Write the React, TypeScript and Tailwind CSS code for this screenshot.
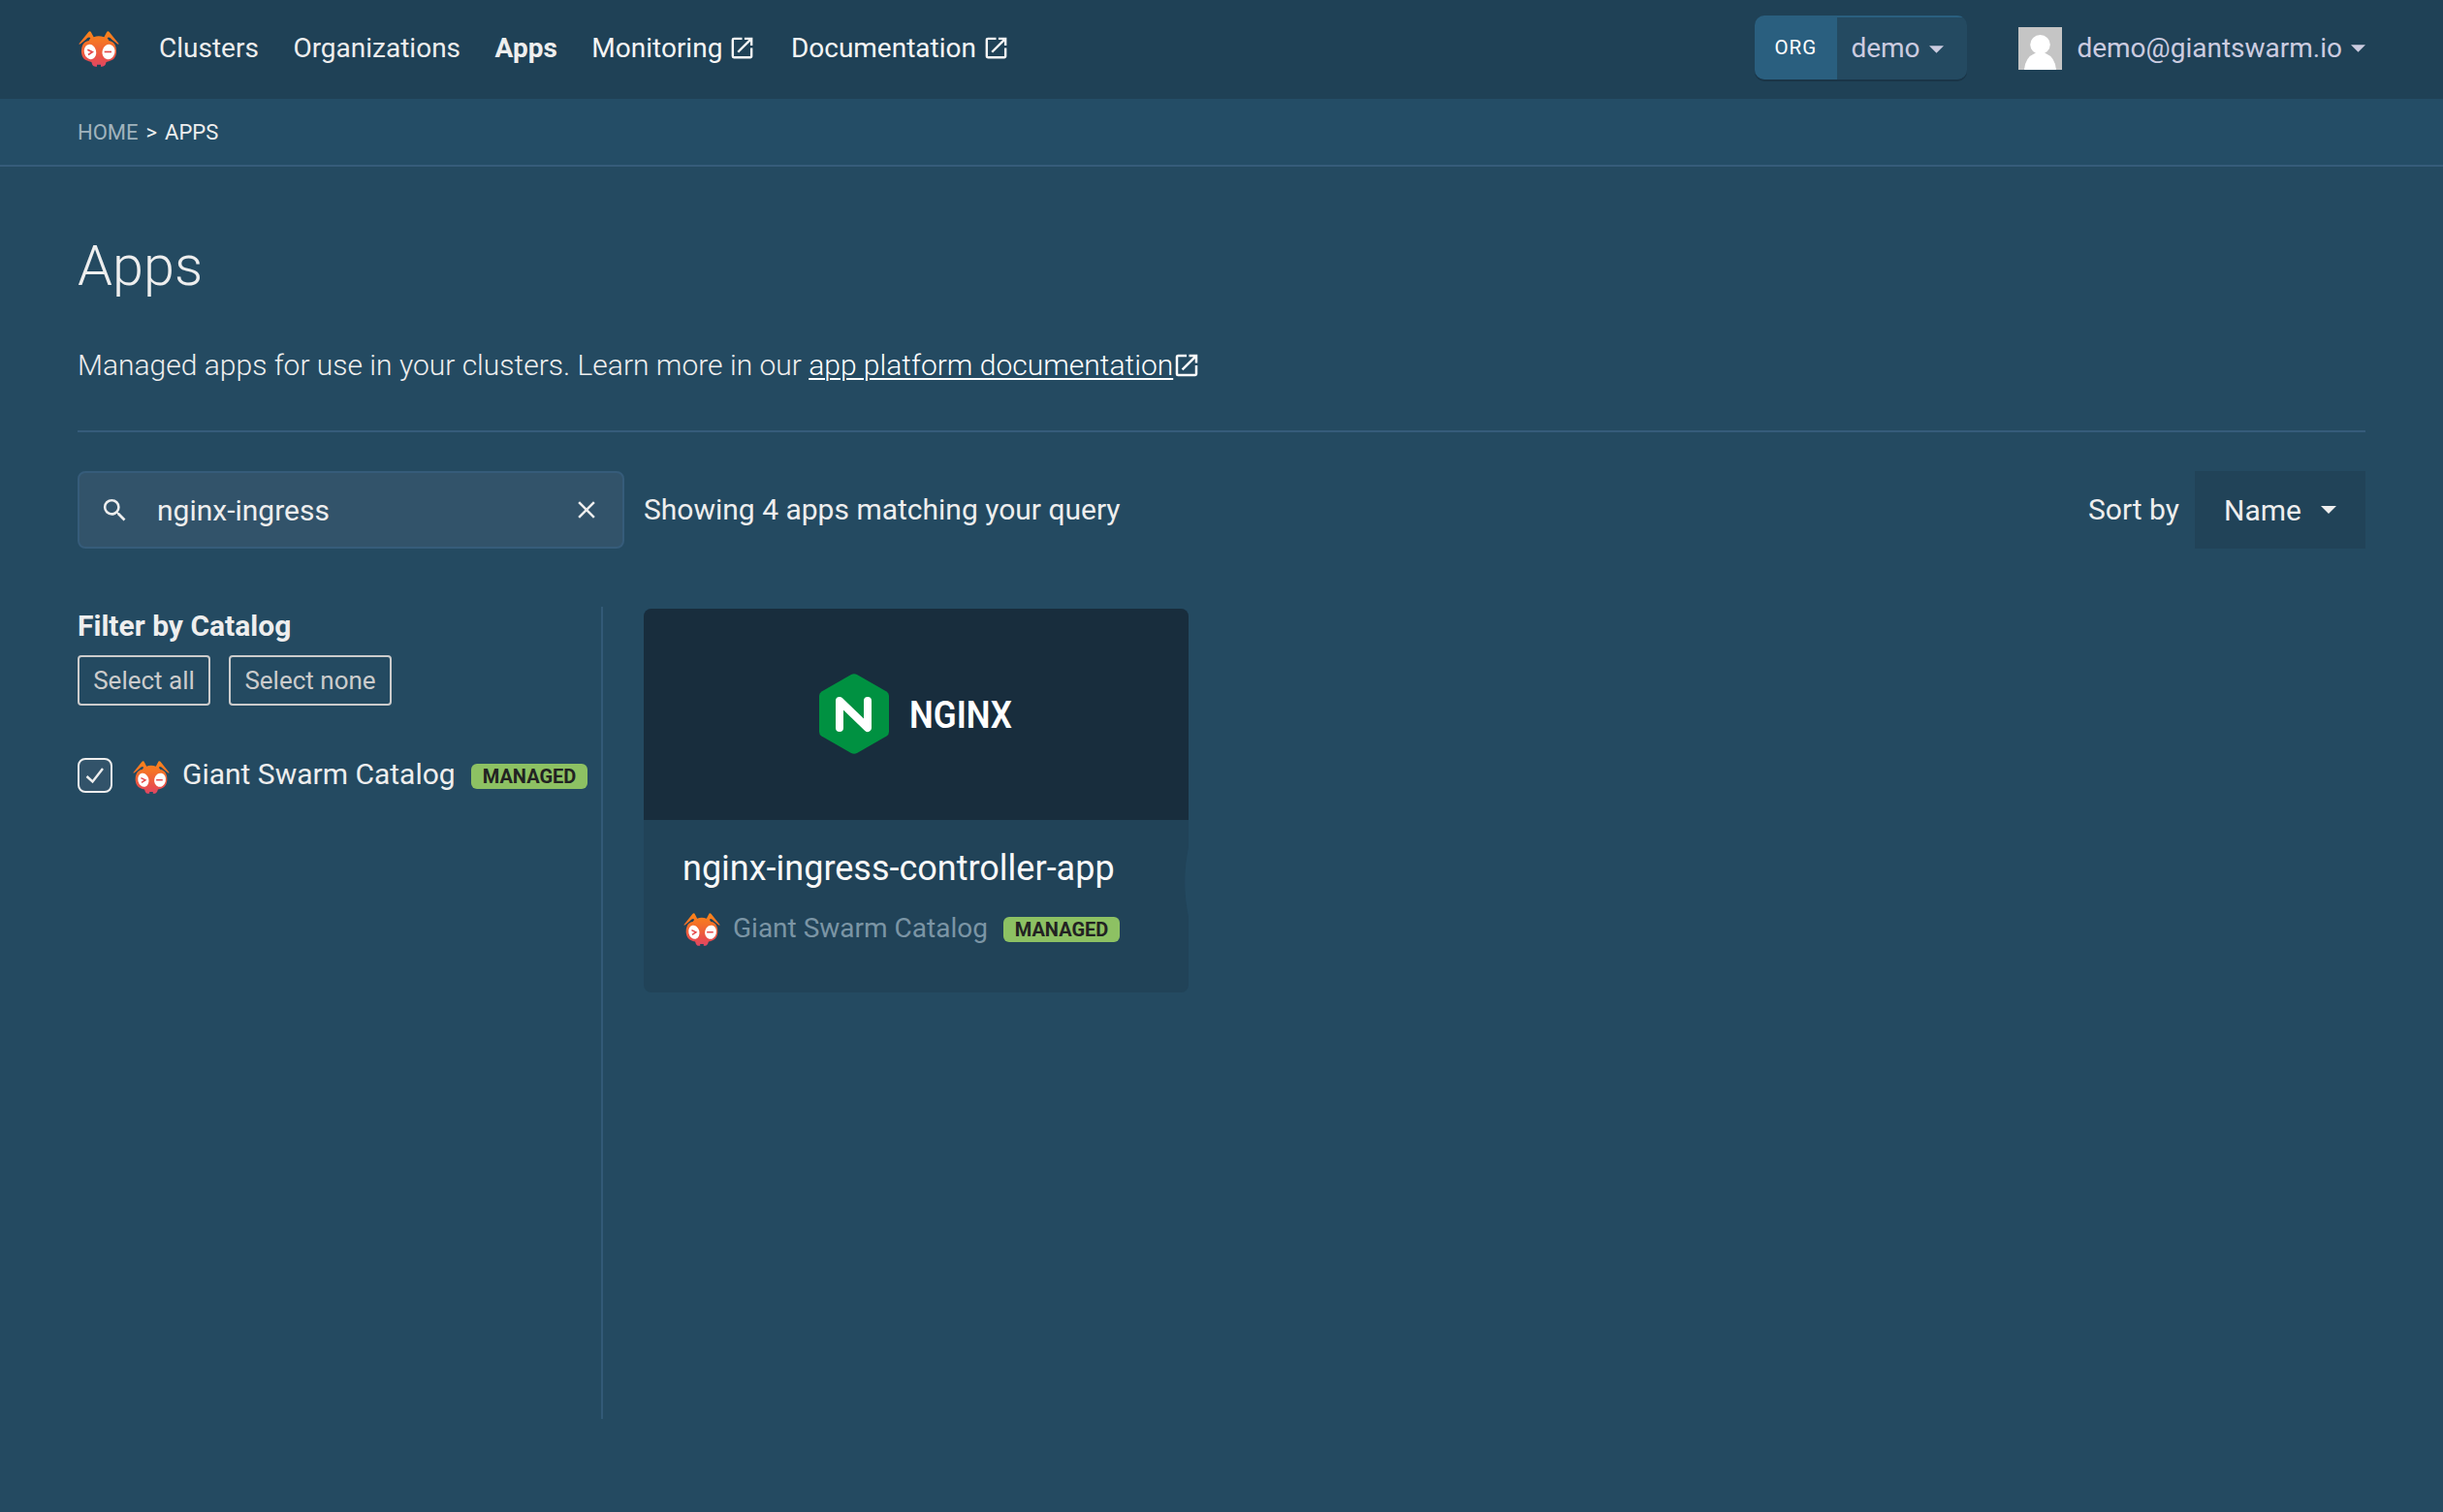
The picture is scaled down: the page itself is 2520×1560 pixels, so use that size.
import React from "react";
import { MdClose, MdOpenInNew, MdSearch } from "react-icons/md";

function SwarmLogo({ className, id }: { className?: string; id: string }) {
  return (
    <svg viewBox="0 0 126 112" preserveAspectRatio="none" className={className} aria-hidden="true">
      <defs>
        <linearGradient id={id} x1="0" y1="0" x2="0" y2="1">
          <stop offset="0" stopColor="#fb8518" />
          <stop offset="0.35" stopColor="#f37029" />
          <stop offset="0.75" stopColor="#ea5148" />
          <stop offset="1" stopColor="#e04763" />
        </linearGradient>
      </defs>
      <path
        fill={`url(#${id})`}
        d="M1 40 L31 3 Q34 -1 38 2 L47 19 Q62 13 79 19 L88 2 Q92 -1 95 3 L125 40 Q123 43 120 40 L104 27 Q93 15 89 23 Q92 26 94 30 Q106 31 113 43 Q118 53 117 67 Q115 85 103 91 Q93 96 86 97 Q84 107 78 110 Q74 112 69 111 L69 105 L57 105 L57 111 Q51 112 47 110 Q42 107 40 97 Q33 96 23 91 Q11 85 9 67 Q8 53 13 43 Q20 31 32 30 Q34 26 37 23 Q33 15 22 27 L6 40 Q3 43 1 40 Z"
      />
      <ellipse cx="36" cy="65" rx="18.500" ry="23.500" transform="rotate(-14 36 65)" fill="#fff" />
      <ellipse cx="93" cy="65" rx="19.500" ry="23.500" transform="rotate(14 93 65)" fill="#fff" />
      <path d="M28 58 L43 65.500 L30 74" fill="none" stroke="#e5484a" strokeWidth="5" />
      <path d="M80 65 H102" stroke="#e5484a" strokeWidth="5" />
    </svg>
  );
}

function Caret({ className }: { className?: string }) {
  return (
    <svg viewBox="0 0 16 8" className={className} aria-hidden="true">
      <path d="M0 0h16l-8 8z" fill="currentColor" />
    </svg>
  );
}

function ManagedBadge() {
  return (
    <span className="flex h-[26px] w-[120px] items-center justify-center rounded-[6px] bg-[#8dc163] text-[20px] font-bold text-[#222]">
      MANAGED
    </span>
  );
}

function Avatar() {
  return (
    <svg viewBox="0 0 45 44" className="h-11 w-[45px]" aria-hidden="true">
      <rect width="45" height="44" fill="#c5c5c5" />
      <ellipse cx="22.5" cy="18" rx="10.3" ry="10" fill="#fff" />
      <path d="M6 44 Q7 31 17 27 Q22 24 28 27 Q38 31 39 44 Z" fill="#fff" />
    </svg>
  );
}

function NginxLogo() {
  return (
    <svg viewBox="0 0 202 84" className="h-[84px] w-[202px] overflow-visible" role="img" aria-label="NGINX">
      <path
        d="M34 1 Q37 -0.4 40 1 L70.5 18.5 Q73 20 73 23 V60 Q73 63 70.5 64.500 L40 82 Q37 83.400 34 82 L3.500 64.500 Q1 63 1 60 V23 Q1 20 3.500 18.500 Z"
        fill="#009141"
      />
      <path
        d="M22 56 V28 L51 56 V28"
        fill="none"
        stroke="#fff"
        strokeWidth="8"
        strokeLinecap="round"
        strokeLinejoin="round"
      />
      <text
        x="94"
        y="56"
        textLength="106"
        lengthAdjust="spacingAndGlyphs"
        fontFamily="Roboto, sans-serif"
        fontWeight="600"
        fontSize="39"
        fill="#fff"
      >
        NGINX
      </text>
    </svg>
  );
}

function NavBar() {
  return (
    <header className="flex h-[102px] items-center bg-[#1f4156] pb-[2px] pl-[81px] pr-20 text-[28px] text-[#eee]">
      <SwarmLogo id="swarm-nav" className="h-[37px] w-[42px]" />
      <nav className="ml-[41px] flex h-10 items-center gap-[35.500px] leading-10">
        <a>Clusters</a>
        <a>Organizations</a>
        <a className="font-bold">Apps</a>
        <a className="flex items-center text-[#f5f5f5]">
          Monitoring
          <MdOpenInNew className="-mt-[2px] ml-[6px] size-[29px]" />
        </a>
        <a className="flex items-center text-[#f5f5f5]">
          Documentation
          <MdOpenInNew className="-mt-[2px] ml-[6px] size-[29px]" />
        </a>
      </nav>
      <div className="ml-auto flex items-center">
        <div className="-mt-[2px] flex h-[66px] w-[219px] overflow-hidden rounded-[10px] shadow-[0_2px_0_#1a3547]">
          <span className="flex w-[85px] items-center justify-center bg-[#2a5f7f] pr-[1px] text-[20.500px] tracking-[1px] text-white">
            ORG
          </span>
          <span className="flex flex-1 items-center border-t-2 border-[#2a5f7f] bg-[#244a61] pl-[14px] text-[#cccce0]">
            <span className="-mt-[1px]">demo</span>
            <Caret className="ml-[9px] mt-[2px] h-[8px] w-[15px]" />
          </span>
        </div>
        <div className="ml-[53px] flex items-center text-[#cccce0]">
          <Avatar />
          <span className="ml-[15px]">demo@giantswarm.io</span>
          <Caret className="ml-[9px] h-[8px] w-[15px]" />
        </div>
      </div>
    </header>
  );
}

function Sidebar() {
  return (
    <aside className="h-[838px] w-[542px] border-r-2 border-[#335a77] pt-0.5">
      <h2 className="text-[30px] font-bold leading-[36px]">Filter by Catalog</h2>
      <div className="mt-[12px] flex gap-[19px] text-[26px] text-[#ccc]">
        <button className="h-[52px] w-[137px] whitespace-nowrap rounded-[4px] border-2 border-[#ccc]">
          Select all
        </button>
        <button className="h-[52px] w-[168px] whitespace-nowrap rounded-[4px] border-2 border-[#ccc]">
          Select none
        </button>
      </div>
      <div className="mt-[52px] flex h-10 items-center">
        <span className="flex h-9 w-9 items-center justify-center rounded-[8px] border-2 border-[#eee] bg-[#32536a]">
          <svg viewBox="0 0 20 18" className="h-[18px] w-5" aria-hidden="true">
            <path d="M1.500 10 L7.500 15.500 L18 2" fill="none" stroke="#eee" strokeWidth="2.400" />
          </svg>
        </span>
        <SwarmLogo id="swarm-filter" className="ml-[21px] mt-[3px] h-[34px] w-[38px]" />
        <span className="-mt-[3px] ml-[13px] w-[298px] whitespace-nowrap text-[30px] leading-9">
          Giant Swarm Catalog
        </span>
        <div className="mt-[2px]">
          <ManagedBadge />
        </div>
      </div>
    </aside>
  );
}

function AppCard() {
  return (
    <article className="relative ml-[42px] mt-0.5 h-[396px] w-[562px] overflow-hidden rounded-[8px] bg-[#214358]">
      <div className="flex h-[218px] items-center justify-center bg-[#182d3d]">
        <NginxLogo />
      </div>
      <div className="px-10 pt-[30px]">
        <h3 className="text-[36px] leading-[40px] text-[#f8f8f8]">nginx-ingress-controller-app</h3>
        <div className="mt-[23px] flex h-10 items-center">
          <SwarmLogo id="swarm-card" className="ml-[1px] h-[34px] w-[38px]" />
          <span className="-mt-[3px] ml-[13px] w-[279px] whitespace-nowrap text-[28px] leading-9 text-[#7b95a5]">
            Giant Swarm Catalog
          </span>
          <ManagedBadge />
        </div>
      </div>
      <svg viewBox="0 0 4 72" className="absolute right-0 top-[246px] h-[72px] w-1" aria-hidden="true">
        <path d="M4 0 Q-3.500 36 4 72 Z" fill="#244a61" />
      </svg>
    </article>
  );
}

export default function App() {
  return (
    <div className="h-[1560px] w-[2520px] overflow-hidden bg-[#244a61] font-['Roboto',sans-serif] text-[#eee]">
      <NavBar />
      <div className="flex h-[70px] items-center gap-2 border-b-2 border-[#365c7a] bg-[#244d66] px-20 text-[22px]">
        <span className="text-[#a0b3bd]">HOME</span>
        <span>&gt;</span>
        <span>APPS</span>
      </div>
      <main className="px-20 pt-[67px]">
        <h1 className="text-[57.600px] font-light leading-[72px]">Apps</h1>
        <p className="mt-[45px] flex h-[42px] items-center text-[30px] font-light leading-[42px]">
          <span className="whitespace-pre">Managed apps for use in your clusters. Learn more in our </span>
          <a className="text-white underline decoration-2 underline-offset-[3px]">app platform documentation</a>
          <MdOpenInNew className="-ml-[1px] size-[30px] text-white" />
        </p>
        <div className="mt-[46px] flex h-[122px] items-end border-t-2 border-[#365c7a] text-[30px]">
          <div className="flex h-20 w-[564px] items-center rounded-[8px] border-2 border-[#365c7a] bg-[#32536a]">
            <MdSearch className="ml-[21px] size-[31px]" />
            <span className="ml-[28px]">nginx-ingress</span>
            <MdClose className="ml-auto mr-[22px] size-[30px]" />
          </div>
          <span className="ml-5 leading-[80px]">Showing 4 apps matching your query</span>
          <span className="ml-auto leading-[80px]">Sort by</span>
          <div className="ml-4 flex h-20 w-44 items-center bg-[#214358] pl-[30px]">
            Name
            <Caret className="ml-[20px] h-2 w-4" />
          </div>
        </div>
        <div className="flex pt-[60px]">
          <Sidebar />
          <AppCard />
        </div>
      </main>
    </div>
  );
}
